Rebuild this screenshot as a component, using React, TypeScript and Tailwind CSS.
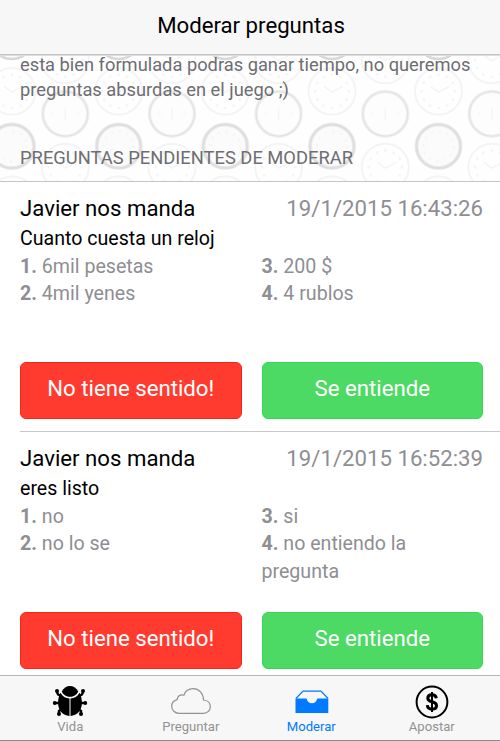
import type { ReactNode } from 'react'

type Question = {
  author: string
  date: string
  text: string
  answers: string[]
}

const questions: Question[] = [
  {
    author: 'Javier',
    date: '19/1/2015 16:43:26',
    text: 'Cuanto cuesta un reloj',
    answers: ['6mil pesetas', '4mil yenes', '200 $', '4 rublos'],
  },
  {
    author: 'Javier',
    date: '19/1/2015 16:52:39',
    text: 'eres listo',
    answers: ['no', 'no lo se', 'si', 'no entiendo la pregunta'],
  },
]

const columns = [12, 118.7, 225.3, 332, 438.5]
const ticks = [0, 30, 60, 90, 120, 150, 180, 210, 240, 270, 300, 330]

const Clock = ({ x, y }: { x: number; y: number }) => (
  <g transform={`translate(${x} ${y})`} fill="none" stroke="#f4f4f4">
    <circle r="23.5" strokeWidth="2" />
    {ticks.map((angle) => (
      <path key={angle} d="M0 -18v2.5" transform={`rotate(${angle})`} strokeWidth="2.5" />
    ))}
    <path d="M-8 -5L0 1L11 -5" strokeWidth="1.5" />
  </g>
)

// Tiled wall clocks behind the intro text
const ClockPattern = () => (
  <svg className="absolute inset-0 h-full w-full" viewBox="0 55 500 126" preserveAspectRatio="none">
    <rect y="55" width="500" height="126" fill="#fefefe" />
    {columns.map((x) => (
      <g key={x}>
        <Clock x={x} y={90.5} />
        <Clock x={x + 53.3} y={59} />
        <Clock x={x + 53.3} y={167} />
        <Clock x={x} y={200} />
        <circle cx={x} cy="36" r="22" fill="#fcfcfc" stroke="#d8d8d8" strokeWidth="2.5" />
        <circle cx={x + 53.3} cy="113.3" r="22.5" fill="#fdfdfd" stroke="#f1f1f1" strokeWidth="3.5" />
        <circle cx={x + 53.3} cy="113.3" r="22.5" fill="none" stroke="#e4e4e4" strokeWidth="1.5" />
        <path d={`M${x + 53.3} 107v13m-14 -7h3m22 0h3`} stroke="#f5f5f5" strokeWidth="1.5" />
        <circle cx={x} cy="146" r="22" fill="#fbfbfb" stroke="#ebebeb" strokeWidth="4" />
        <circle cx={x} cy="146" r="22" fill="none" stroke="#dedede" strokeWidth="2" />
        <circle cx={x} cy="146" r="15" fill="none" stroke="#f4f4f4" strokeWidth="2" strokeDasharray="2 5.85" />
      </g>
    ))}
  </svg>
)

const BugIcon = () => (
  <svg className="-mt-0.5" width="36" height="32" viewBox="0 0 36 32" fill="#000">
    <path d="M9.8 6.500C11.500 3 14.500 1 18 1S24.500 3 26.200 6.500C24.500 10.300 21.500 11.800 18 11.800S11.500 10.300 9.800 6.500Z" />
    <path d="M8.500 7.800C10.500 11.400 13.500 13.300 17.500 13.500V31C11 30.500 6.300 25.500 6.100 18.500C6 14.500 6.800 11 8.500 7.800Z" />
    <path d="M27.500 7.800C25.500 11.400 22.500 13.300 18.500 13.500V31C25 30.500 29.700 25.500 29.900 18.500C30 14.500 29.200 11 27.500 7.800Z" />
    <path d="M9 11L6 9.500L5 7M27 11L30 9.500L31 7M8 18H3M28 18H33M10 24L7 26V29M26 24L29 26V29" fill="none" stroke="#000" strokeWidth="2.4" />
    <circle cx="5" cy="6" r="2" />
    <circle cx="31" cy="6" r="2" />
    <circle cx="2.7" cy="18" r="1.9" />
    <circle cx="33.3" cy="18" r="1.9" />
    <circle cx="7" cy="29" r="2" />
    <circle cx="29" cy="29" r="2" />
  </svg>
)

const CloudIcon = () => (
  <svg className="-mt-0.5" width="40" height="26" viewBox="0 0 40 26" fill="none" stroke="#929292" strokeWidth="1.2">
    <path d="M8 25.300H32.500C36.500 25.300 39.300 22.500 39.300 18.700C39.300 15 36.500 12.200 32.500 12C32.500 5.500 28 .700 22 .700C17.500 .700 14.300 3.200 12.800 7.200C9.200 6 6.200 8.300 6.200 11.600C2.700 12.500 .700 15.200 .700 18.300C.700 22.300 3.800 25.300 8 25.300Z" />
  </svg>
)

const TrayIcon = () => (
  <svg className="ml-px" width="34" height="24" viewBox="0 0 34 24" fill="#007aff">
    <path d="M.5 8.500H11.500C12.300 11.300 14 13.300 16.900 13.300S21.500 11.300 22.300 8.500H33.300V23H.5Z" />
    <path d="M1 8.500L8 1.200H26L33 8.500" fill="none" stroke="#007aff" strokeWidth="1.2" />
  </svg>
)

const CoinIcon = () => (
  <svg className="ml-px" width="34" height="34" viewBox="0 0 34 34" fill="none" stroke="#000">
    <circle cx="17" cy="17" r="15.4" strokeWidth="2" />
    <path d="M21.300 13.300C21 10.900 19.500 9.800 17 9.800C14.500 9.800 12.800 11.200 12.800 13.200C12.800 18 21.500 15.500 21.500 20.500C21.500 22.800 19.700 24.200 17 24.200C14.300 24.200 12.600 22.900 12.300 20.200" strokeWidth="3" />
    <path d="M17 7V27" strokeWidth="2" />
  </svg>
)

const Answer = ({ number, children }: { number: number; children: ReactNode }) => (
  <p>
    <b className="font-bold">{number}.</b> {children}
  </p>
)

const QuestionItem = ({ question }: { question: Question }) => (
  <li className="ml-5 h-[250px] border-b border-[#c8c7cc] pt-[11px] pr-[17px] last:border-0">
    <div className="flex h-8 justify-between text-[22.2px] leading-[31px]">
      <h2>{question.author} nos manda</h2>
      <time className="text-[#8e8e93]">{question.date}</time>
    </div>
    <h3 className="h-[28px] text-[19.6px] leading-[28px]">{question.text}</h3>
    <div className="grid h-[109px] grid-cols-2 gap-x-5 text-[19.6px] leading-[27.3px] text-[#8e8e93]">
      <div>
        <Answer number={1}>{question.answers[0]}</Answer>
        <Answer number={2}>{question.answers[1]}</Answer>
      </div>
      <div>
        <Answer number={3}>{question.answers[2]}</Answer>
        <Answer number={4}>{question.answers[3]}</Answer>
      </div>
    </div>
    <div className="grid grid-cols-2 gap-5 text-[22.2px] text-white">
      <button className="h-[57px] rounded-md border border-[#ff2018] bg-[#ff3b30] pb-1">No tiene sentido!</button>
      <button className="h-[57px] rounded-md border border-[#35d955] bg-[#4cd964] pb-1">Se entiende</button>
    </div>
  </li>
)

const Tab = ({ icon, label, active = false }: { icon: ReactNode; label: string; active?: boolean }) => (
  <a className="flex w-[120.5px] flex-col items-center">
    <span className="flex h-[42px] items-center justify-center pt-[9px]">{icon}</span>
    <span className={`text-[13.1px] leading-[18px] ${active ? 'text-[#007aff]' : 'text-[#929292]'}`}>{label}</span>
  </a>
)

export default function App() {
  return (
    <div className="flex h-[741px] w-[500px] flex-col overflow-hidden bg-white font-[Roboto,sans-serif] text-black">
      <header className="flex h-[55px] shrink-0 items-center justify-center border-b border-[#c4c4c4] bg-[#f7f7f7] pb-0.5 pl-[2px] text-[22.2px]">
        <h1>Moderar preguntas</h1>
      </header>
      <section className="relative h-[126px] shrink-0 overflow-hidden border-t border-[#dcdcdc] text-[#6d6d72]">
        <ClockPattern />
        <div className="relative pl-5">
          <p className="-mt-1 w-[470px] text-[18.3px] leading-[25px]">
            esta bien formulada podras ganar tiempo, no queremos preguntas absurdas en el juego ;)
          </p>
          <h2 className="mt-[43px] text-[18.35px] leading-[26px] uppercase">Preguntas pendientes de moderar</h2>
        </div>
      </section>
      <ul className="h-[494px] shrink-0 overflow-hidden border-t border-[#c4c4c4]">
        {questions.map((question) => (
          <QuestionItem key={question.date} question={question} />
        ))}
      </ul>
      <nav className="flex h-[66px] shrink-0 justify-center border-y border-t-[#b5b5b5] border-b-[#8c8c8c] bg-[#f7f7f7] pl-[2px]">
        <Tab icon={<BugIcon />} label="Vida" />
        <Tab icon={<CloudIcon />} label="Preguntar" />
        <Tab icon={<TrayIcon />} label="Moderar" active />
        <Tab icon={<CoinIcon />} label="Apostar" />
      </nav>
    </div>
  )
}
